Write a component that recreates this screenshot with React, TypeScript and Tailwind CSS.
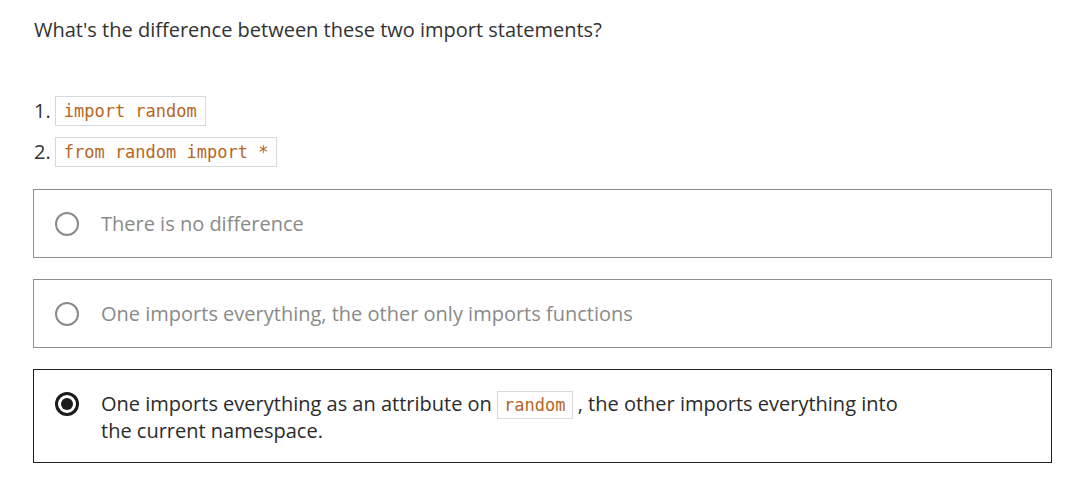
import React from 'react';

const sans = { fontFamily: '"Open Sans", "Noto Sans", sans-serif' };
const mono = { fontFamily: '"DejaVu Sans Mono", "Liberation Mono", monospace' };

function Code({ children }: { children: React.ReactNode }) {
  return (
    <code
      className="inline-block border border-[#d6d9dd] bg-white px-[8px] text-[17px] leading-[28px] text-[#b8661f]"
      style={mono}
    >
      {children}
    </code>
  );
}

function InlineCode({ children }: { children: React.ReactNode }) {
  return (
    <code
      className="border border-[#d6d9dd] bg-white px-[6px] py-[3px] align-baseline text-[17px] text-[#b8661f]"
      style={mono}
    >
      {children}
    </code>
  );
}

function Radio({ checked }: { checked?: boolean }) {
  if (checked) {
    return (
      <span className="flex h-[24px] w-[24px] shrink-0 items-center justify-center rounded-full border-[3px] border-[#1b1b1b]">
        <span className="h-[12px] w-[12px] rounded-full bg-[#1b1b1b]" />
      </span>
    );
  }
  return <span className="h-[24px] w-[24px] shrink-0 rounded-full border-2 border-[#8a8a8a]" />;
}

const options = [
  { id: 1, text: 'There is no difference' },
  { id: 2, text: 'One imports everything, the other only imports functions' },
];

export default function App() {
  return (
    <div className="min-h-screen bg-white pl-[34px] pr-[22px] pt-4 text-[#323232]" style={sans}>
      <p className="text-[20px] leading-[28px]">What's the difference between these two import statements?</p>

      <ol className="mt-[52px] flex flex-col gap-[11px] text-[20px]">
        <li className="flex items-center gap-[4px]">
          <span>1.</span>
          <Code>import random</Code>
        </li>
        <li className="flex items-center gap-[4px]">
          <span>2.</span>
          <Code>from random import *</Code>
        </li>
      </ol>

      <div className="ml-[-1px] mt-[22px] flex flex-col gap-[21px]">
        {options.map((o) => (
          <label
            key={o.id}
            className="flex items-center gap-[22px] border border-[#8f8f8f] pb-[20px] pl-[21px] pr-4 pt-[21px]"
          >
            <Radio />
            <span className="text-[20px] leading-[26px] text-[#8a8a8a]">{o.text}</span>
          </label>
        ))}

        <label className="flex items-start gap-[22px] border border-[#1e1e1e] pb-[18px] pl-[21px] pr-4 pt-[21px]">
          <span className="mt-[1px]">
            <Radio checked />
          </span>
          <span className="max-w-[800px] text-[20px] leading-[26px] text-[#2b2b2b]">
            One imports everything as an attribute on <InlineCode>random</InlineCode> , the other imports everything into the current namespace.
          </span>
        </label>
      </div>
    </div>
  );
}
